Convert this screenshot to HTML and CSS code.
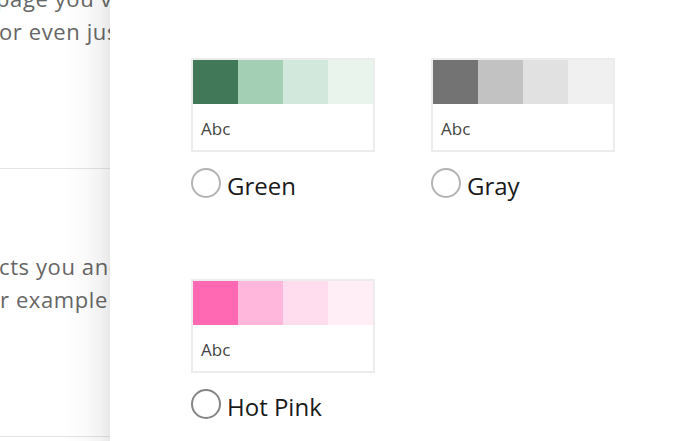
FILE: index.html
```html
<!DOCTYPE html>
<html lang="en">
<head>
<meta charset="utf-8">
<title>Themes</title>
<link rel="stylesheet" href="styles.css">
</head>
<body>
<div class="page">
  <div class="behind">
    <div class="para para-1">
      <div class="line l1">page you visit</div>
      <div class="line l2">or even just</div>
    </div>
    <div class="rule rule-1"></div>
    <div class="para para-2">
      <div class="line l3">cts you and</div>
      <div class="line l4">r example</div>
    </div>
    <div class="rule rule-2"></div>
  </div>
  <div class="panel">
    <div class="grid">
      <div class="item">
        <div class="card">
          <div class="swatches">
            <span class="sw g1"></span><span class="sw g2"></span><span class="sw g3"></span><span class="sw g4"></span>
          </div>
          <div class="sample">Abc</div>
        </div>
        <label class="option"><span class="radio"></span><span class="name">Green</span></label>
      </div>
      <div class="item">
        <div class="card">
          <div class="swatches">
            <span class="sw y1"></span><span class="sw y2"></span><span class="sw y3"></span><span class="sw y4"></span>
          </div>
          <div class="sample">Abc</div>
        </div>
        <label class="option"><span class="radio"></span><span class="name">Gray</span></label>
      </div>
      <div class="item">
        <div class="card">
          <div class="swatches">
            <span class="sw p1"></span><span class="sw p2"></span><span class="sw p3"></span><span class="sw p4"></span>
          </div>
          <div class="sample">Abc</div>
        </div>
        <label class="option"><span class="radio radio-hover"></span><span class="name">Hot Pink</span></label>
      </div>
    </div>
  </div>
</div>
</body>
</html>
```

FILE: styles.css
```css
* { box-sizing: border-box; }
html, body {
  margin: 0;
  padding: 0;
  background: #fff;
  width: 700px;
  height: 441px;
  overflow: hidden;
  font-family: "Open Sans", "Noto Sans", sans-serif;
}
.page {
  display: flex;
  width: 700px;
  height: 441px;
}
.behind {
  width: 110px;
  flex: 0 0 110px;
  overflow: hidden;
  color: #666;
  font-size: 22px;
  line-height: 33px;
  letter-spacing: 0.6px;
}
.line { white-space: nowrap; }
.para-1 { margin-top: -18px; }
.l1 { margin-left: -4px; }
.l2 { margin-left: -1px; }
.l3 { margin-left: -1px; }
.l4 { margin-left: 0; }
.rule {
  height: 1px;
  background: #e3e3e3;
}
.rule-1 { margin-top: 120px; }
.para-2 { margin-top: 81px; }
.rule-2 { margin-top: 120px; }

.panel {
  position: relative;
  flex: 1;
  background: #fff;
  padding: 58px 0 0 81px;
}
.panel::before {
  content: "";
  position: absolute;
  top: 0;
  bottom: 0;
  left: -46px;
  width: 46px;
  background: linear-gradient(to right, rgba(0,0,0,0) 0%, rgba(0,0,0,0.02) 45%, rgba(0,0,0,0.05) 80%, rgba(0,0,0,0.09) 100%);
}
.grid {
  display: grid;
  grid-template-columns: 184px 184px;
  column-gap: 56px;
  row-gap: 80px;
}
.item {
  display: flex;
  flex-direction: column;
}
.card {
  width: 184px;
  height: 94px;
  border: 2px solid #ececec;
  background: #fff;
}
.swatches {
  display: flex;
  height: 44px;
}
.sw { flex: 1; }
.g1 { background: #417857; }
.g2 { background: #a3cfb4; }
.g3 { background: #d3e8dc; }
.g4 { background: #e9f4ed; }
.y1 { background: #737373; }
.y2 { background: #c2c2c2; }
.y3 { background: #e1e1e1; }
.y4 { background: #f0f0f0; }
.p1 { background: #ff69b4; }
.p2 { background: #ffb7dc; }
.p3 { background: #ffdcee; }
.p4 { background: #ffeef6; }
.sample {
  height: 46px;
  padding: 9px 0 0 8px;
  font-size: 17px;
  line-height: 32px;
  color: #444;
}
.option {
  display: flex;
  align-items: center;
  gap: 6px;
  margin-top: 15px;
  height: 32px;
}
.radio {
  width: 30px;
  height: 30px;
  border-radius: 50%;
  border: 2px solid #b3b3b3;
  flex: 0 0 30px;
}
.radio-hover { border-color: #858585; }
.name {
  font-size: 24px;
  color: #1a1a1a;
  line-height: 32px;
  padding-top: 5px;
}
```
